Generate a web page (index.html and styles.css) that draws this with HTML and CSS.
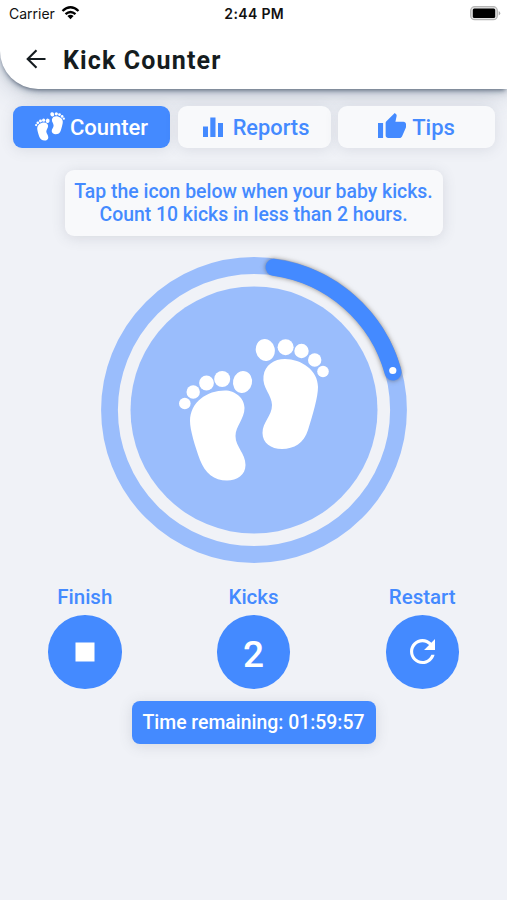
FILE: index.html
```html
<!DOCTYPE html>
<html lang="en">
<head>
<meta charset="utf-8">
<title>Kick Counter</title>
<link rel="stylesheet" href="styles.css">
</head>
<body>
<svg class="defs" width="0" height="0" aria-hidden="true">
  <symbol id="feet" viewBox="0 0 150 143">
    <g fill="currentColor">
      <ellipse cx="86.300" cy="11" rx="9.500" ry="11" transform="rotate(-12 86.300 11)"/>
      <circle cx="106.600" cy="8.200" r="8"/>
      <circle cx="122.500" cy="12" r="7.200"/>
      <circle cx="135.700" cy="21" r="6.700"/>
      <circle cx="144" cy="32.500" r="5.800"/>
      <path d="M84.500 37C86 26 95 20 106 20C122 20 139 31 139 48C139 58 134 75 129 91C125 104 115 110 103 110C92 110 83.500 104 83.500 94C83.500 83 93 77 93 66C93 56 83 49 84.500 37Z"/>
      <ellipse cx="63.500" cy="43" rx="9.500" ry="11" transform="rotate(12 63.500 43)"/>
      <circle cx="43.200" cy="40" r="8"/>
      <circle cx="27.500" cy="44" r="7.400"/>
      <circle cx="14.200" cy="53" r="6.700"/>
      <circle cx="5.800" cy="64.500" r="5.800"/>
      <path d="M65.500 69C65.500 59 56 51.500 46 51.500C28 51.500 11 63 11 82C11 91 16 107 21 121C26 134 35 141.500 48 141.500C58 141.500 66.500 136 66.500 126C66.500 114 56.500 108 56.500 97C56.500 87 65.500 80 65.500 69Z"/>
    </g>
  </symbol>
</svg>
<div class="app">
  <header class="header">
    <div class="status">
      <div class="carrier"><span>Carrier</span>
        <svg class="wifi" width="19" height="14" viewBox="0 0 18 14"><g fill="none" stroke="#000" stroke-width="2.300"><path d="M1 5Q9-2.500 17 5"/><path d="M4 8.200Q9 3.700 14 8.200"/></g><path d="M5.900 10Q9 7.300 12.100 10L9 13.300Z"/></svg>
      </div>
      <div class="clock">2:44 PM</div>
      <svg class="battery" width="31" height="15" viewBox="0 0 31 15"><rect x=".7" y=".7" width="26.600" height="13" rx="4" fill="#e4e4e4" stroke="#b5b5b5" stroke-width="1.300"/><rect x="2.800" y="2.500" width="22.400" height="9.400" rx="1.500" fill="#000"/><path d="M28.700 5Q31.800 7.200 28.700 9.500Z" fill="#aaa"/></svg>
    </div>
    <div class="titlebar">
      <svg width="20" height="20" viewBox="0 0 20 20"><path d="M19.500 10H2M10.500 1.200L1.700 10L10.500 18.800" fill="none" stroke="#151c20" stroke-width="2.100"/></svg>
      <h1>Kick Counter</h1>
    </div>
  </header>
  <nav class="tabs">
    <div class="tab active"><svg class="tab-feet"><use href="#feet"/></svg><span>Counter</span></div>
    <div class="tab reports"><svg width="20" height="20" viewBox="0 0 20 20" fill="currentColor"><path d="M0 9.500h5V20H0zM7.300 .5h5.200V20H7.300zM15 6h5v14h-5z"/></svg><span>Reports</span></div>
    <div class="tab tips"><svg width="28" height="25" viewBox="1 1 22 20" preserveAspectRatio="none" fill="currentColor"><path d="M1 21h4V9H1v12zm22-11c0-1.100-.9-2-2-2h-6.310l.95-4.570.03-.32c0-.41-.17-.79-.44-1.060L14.170 1 7.590 7.590C7.220 7.950 7 8.450 7 9v10c0 1.100.9 2 2 2h9c.83 0 1.540-.5 1.840-1.220l3.020-7.050c.09-.23.14-.47.14-.73v-2z"/></svg><span>Tips</span></div>
  </nav>
  <main>
    <p class="info"><span class="line">Tap the icon below when your baby kicks.</span><span class="line second">Count 10 kicks in less than 2 hours.</span></p>
    <svg class="dial" width="322" height="322" viewBox="-161 -161 322 322">
      <circle r="144.500" fill="none" stroke="#9abdfc" stroke-width="16.800"/>
      <circle r="123.500" fill="#9abdfc"/>
      <path class="progress" d="M20-142.700A144.100 144.100 0 0 1 139-38"/>
      <circle cx="138.800" cy="-39.500" r="3.600" fill="#fff"/>
      <use href="#feet" class="dial-feet" x="-75" y="-71" width="150" height="143"/>
    </svg>
    <section class="actions">
      <div class="action"><span class="label">Finish</span><div class="round"><svg width="20" height="20"><rect x=".5" y=".5" width="19" height="19" fill="#fff"/></svg></div></div>
      <div class="action"><span class="label">Kicks</span><div class="round"><span class="count">2</span></div></div>
      <div class="action"><span class="label">Restart</span><div class="round"><svg width="25" height="25" viewBox="4 4 16 16"><path fill="#fff" d="M17.650 6.350C16.200 4.900 14.210 4 12 4c-4.420 0-7.990 3.580-7.990 8s3.570 8 7.990 8c3.730 0 6.840-2.550 7.730-6h-2.080c-.82 2.330-3.040 4-5.650 4-3.310 0-6-2.690-6-6s2.690-6 6-6c1.660 0 3.140.69 4.220 1.780L13 11h7V4l-2.350 2.350z"/></svg></div></div>
    </section>
    <div class="timer"><span>Time remaining: 01:59:57</span></div>
  </main>
</div>
</body>
</html>
```

FILE: styles.css
```css
* { box-sizing: border-box; }
body { margin: 0; background: #f0f2f7; font-family: Roboto, sans-serif; color: #448aff; font-weight: 500; }
.defs { position: absolute; }
.app { height: 900px; overflow: hidden; }
.header { height: 89px; background: #fff; border-radius: 0 0 0 38px; box-shadow: 0 3px 4px -2px rgba(45,60,80,.65), 0 4px 7px rgba(70,90,120,.25), 0 3px 28px rgba(70,90,120,.28); color: #151c20; }
.status { display: grid; grid-template-columns: 1fr auto 1fr; align-items: center; height: 27px; padding: 0 6px 0 9px; color: #111; font: 400 14px/20px Inter, sans-serif; }
.carrier { display: flex; align-items: center; gap: 6px; }
.wifi { margin-top: -1px; }
.clock { font-weight: 600; font-size: 14px; letter-spacing: .35px; margin-left: -1.500px; }
.battery { justify-self: end; }
.titlebar { display: flex; align-items: center; height: 65px; padding: 0 0 0 25.500px; gap: 17.500px; }
.titlebar svg { margin-top: -1px; }
h1 { margin: 2px 0 0; font-size: 25px; line-height: 30px; font-weight: 700; letter-spacing: 1.150px; white-space: nowrap; }
.tabs { display: grid; grid-template-columns: 157px 153px 157px; gap: 7.5px; padding: 17px 12px 0 13px; }
.tab { display: flex; align-items: center; justify-content: center; height: 41.5px; border-radius: 9px; background: #f8f9fb; box-shadow: 0 2px 14px rgba(80,85,105,.13); font-size: 22px; line-height: 26px; gap: 9px; white-space: nowrap; }
.tab span { margin-top: 2px; }
.tab.active { background: #448aff; color: #fff; gap: 5px; }
.tab-feet { width: 30px; height: 29px; }
.tab.reports { gap: 10px; padding-left: 4px; font-size: 21.800px; }
.tab.tips { gap: 6px; }
.tips svg { margin-top: -2px; }
main { display: flex; flex-direction: column; align-items: center; }
.info { width: 378px; height: 66px; margin: 22px 0 0; padding-top: 10px; border-radius: 9px; background: #f8f9fb; box-shadow: 0 2px 14px rgba(80,85,105,.16); text-align: center; font-size: 19.400px; line-height: 23px; white-space: nowrap; }
.line { display: block; }
.dial { margin-top: 13.500px; }
.progress { fill: none; stroke: #448aff; stroke-width: 17; stroke-linecap: round; filter: drop-shadow(0 0 2.500px rgba(70,60,50,.6)); }
.dial-feet { color: #fff; }
.actions { display: grid; grid-template-columns: repeat(3, 168.750px); margin-top: 14px; }
.action { display: flex; flex-direction: column; align-items: center; }
.label { font-size: 20.500px; line-height: 24px; }
.round { display: flex; align-items: center; justify-content: center; width: 73.500px; height: 73.500px; margin-top: 6px; border-radius: 50%; background: #448aff; color: #fff; }
.count { font-size: 37px; line-height: 44px; margin-top: 6px; }
.timer { display: flex; align-items: center; justify-content: center; width: 244px; height: 43px; margin-top: 12px; padding-top: 2px; border-radius: 8px; background: #448aff; color: #fff; box-shadow: 0 2px 14px rgba(80,85,105,.16); font-size: 19.400px; line-height: 24px; white-space: nowrap; }
```
